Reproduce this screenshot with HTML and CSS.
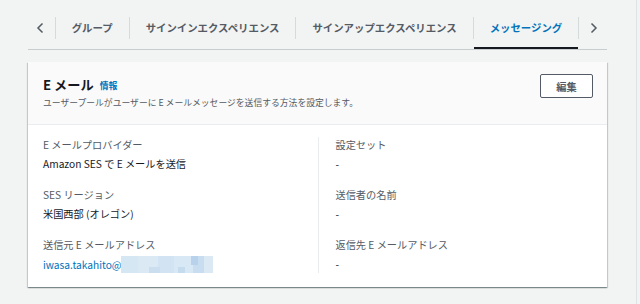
FILE: index.html
```html
<!DOCTYPE html>
<html lang="ja">

<head>
    <meta charset="utf-8" />
    <meta name="viewport" content="width=device-width, initial-scale=1.0" />
    <title>メッセージング</title>
    <link rel="stylesheet" href="styles.css">
</head>

<body>
    <div class="page">
        <div class="tabs">
            <button class="tab-arrow" type="button" aria-label="前へ">
                <svg width="12" height="12" viewBox="0 0 12 12"><polyline points="7.5,1.5 3,6 7.5,10.5" fill="none" stroke="#545b64" stroke-width="1.5" /></svg>
            </button>
            <span class="tab-sep"></span>
            <a class="tab">グループ</a>
            <span class="tab-sep"></span>
            <a class="tab">サインインエクスペリエンス</a>
            <span class="tab-sep"></span>
            <a class="tab">サインアップエクスペリエンス</a>
            <span class="tab-sep"></span>
            <a class="tab tab-active">メッセージング</a>
            <span class="tab-sep"></span>
            <button class="tab-arrow" type="button" aria-label="次へ">
                <svg width="12" height="12" viewBox="0 0 12 12"><polyline points="4.5,1.5 9,6 4.5,10.5" fill="none" stroke="#545b64" stroke-width="1.5" /></svg>
            </button>
        </div>

        <div class="card">
            <div class="card-header">
                <div class="card-heading">
                    <div class="card-title">E メール <a class="info-link">情報</a></div>
                    <div class="card-descr">ユーザープールがユーザーに E メールメッセージを送信する方法を設定します。</div>
                </div>
                <button class="btn" type="button">編集</button>
            </div>

            <div class="card-body">
                <div class="col">
                    <div class="field">
                        <div class="field-label">E メールプロバイダー</div>
                        <div class="field-value">Amazon SES で E メールを送信</div>
                    </div>
                    <div class="field">
                        <div class="field-label">SES リージョン</div>
                        <div class="field-value">米国西部 (オレゴン)</div>
                    </div>
                    <div class="field">
                        <div class="field-label">送信元 E メールアドレス</div>
                        <div class="field-value link">iwasa.takahito@<span class="redact"></span></div>
                    </div>
                </div>
                <div class="col col-right">
                    <div class="field">
                        <div class="field-label">設定セット</div>
                        <div class="field-value">-</div>
                    </div>
                    <div class="field">
                        <div class="field-label">送信者の名前</div>
                        <div class="field-value">-</div>
                    </div>
                    <div class="field">
                        <div class="field-label">返信先 E メールアドレス</div>
                        <div class="field-value">-</div>
                    </div>
                </div>
            </div>
        </div>
    </div>
</body>

</html>
```

FILE: styles.css
```css
/* Общие стили */
body {
    margin: 0;
    font-family: 'Noto Sans CJK JP', 'Noto Sans', sans-serif;
    background-color: #f2f3f3;
    color: #16191f;
    height: 304px;
    overflow: hidden;
}

.page {
    width: 579px;
    height: 304px;
    padding: 0 29px 0 28px;
    border-right: 1px solid #e1e4e4;
}

/* Вкладки */
.tabs {
    display: flex;
    align-items: stretch;
    height: 43px;
    padding-top: 6px;
    border-bottom: 1px solid #c9cdcd;
}

.tab-arrow {
    display: flex;
    align-items: center;
    justify-content: center;
    width: 27px;
    padding: 0 0 0 0;
    border: none;
    background: none;
    cursor: pointer;
}

.tab-arrow:last-child {
    width: 28px;
    justify-content: flex-start;
    padding-left: 8px;
}

.tab-sep {
    align-self: flex-start;
    width: 1px;
    height: 22px;
    margin-top: 11px;
    background-color: #d5dbdb;
}

.tab {
    position: relative;
    padding: 14px 16px 0;
    font-size: 10.4px;
    font-weight: 700;
    line-height: 16px;
    color: #545b64;
    white-space: nowrap;
    cursor: pointer;
}

.tab-active {
    color: #0073bb;
}

.tab-active::after {
    content: '';
    position: absolute;
    left: 0;
    right: 0;
    bottom: 0;
    height: 2px;
    background-color: #16191f;
}

/* Карточка */
.card {
    margin-top: 12px;
    background: #ffffff;
    box-shadow: 0 1px 1px 0 rgba(0, 28, 36, 0.3), 1px 1px 1px 0 rgba(0, 28, 36, 0.15), -1px 1px 1px 0 rgba(0, 28, 36, 0.15);
}

.card-header {
    display: flex;
    justify-content: space-between;
    align-items: flex-start;
    padding: 12px 14px 15px 15px;
    background-color: #fafafa;
    border-bottom: 1px solid #eaeded;
}

.card-title {
    font-size: 13.2px;
    font-weight: 700;
    line-height: 22px;
}

.info-link {
    margin-left: 3px;
    font-size: 8.8px;
    font-weight: 700;
    color: #0073bb;
    vertical-align: 1px;
}

.card-descr {
    font-size: 8.8px;
    line-height: 12px;
    color: #545b64;
}

.btn {
    width: 53px;
    height: 24px;
    padding: 0;
    font-family: inherit;
    font-size: 10.2px;
    font-weight: 700;
    color: #545b64;
    background: #ffffff;
    border: 1px solid #545b64;
    border-radius: 2px;
    cursor: pointer;
}

.card-body {
    display: grid;
    grid-template-columns: 1fr 1fr;
    padding: 12px 15px 14px;
}

.col {
    display: flex;
    flex-direction: column;
    gap: 15px;
}

.col-right {
    padding-left: 17px;
    border-left: 1px solid #eaeded;
}

.field-label {
    font-size: 10.2px;
    line-height: 16px;
    margin-bottom: 3px;
    color: #545b64;
}

.field-value {
    font-size: 10.2px;
    line-height: 16px;
    color: #16191f;
}

.field-value.link {
    color: #0073bb;
    display: flex;
    align-items: center;
}

/* Закрытая часть адреса */
.redact {
    display: inline-block;
    width: 92px;
    height: 17px;
    background:
        linear-gradient(90deg, transparent 0 76%, #b7d2ea 76% 84%, transparent 84%) top / 100% 9px no-repeat,
        linear-gradient(90deg, transparent 0 30%, #cadef0 30% 42%, transparent 42% 62%, #c5dbee 62% 70%, transparent 70%) bottom / 100% 6px no-repeat,
        linear-gradient(90deg, #d6e7f4 0 18%, #dbe9f5 18% 40%, #d2e4f3 40% 58%, #d9e8f5 58% 78%, #c8ddef 78% 90%, #dbe9f5 90%);
}
```
